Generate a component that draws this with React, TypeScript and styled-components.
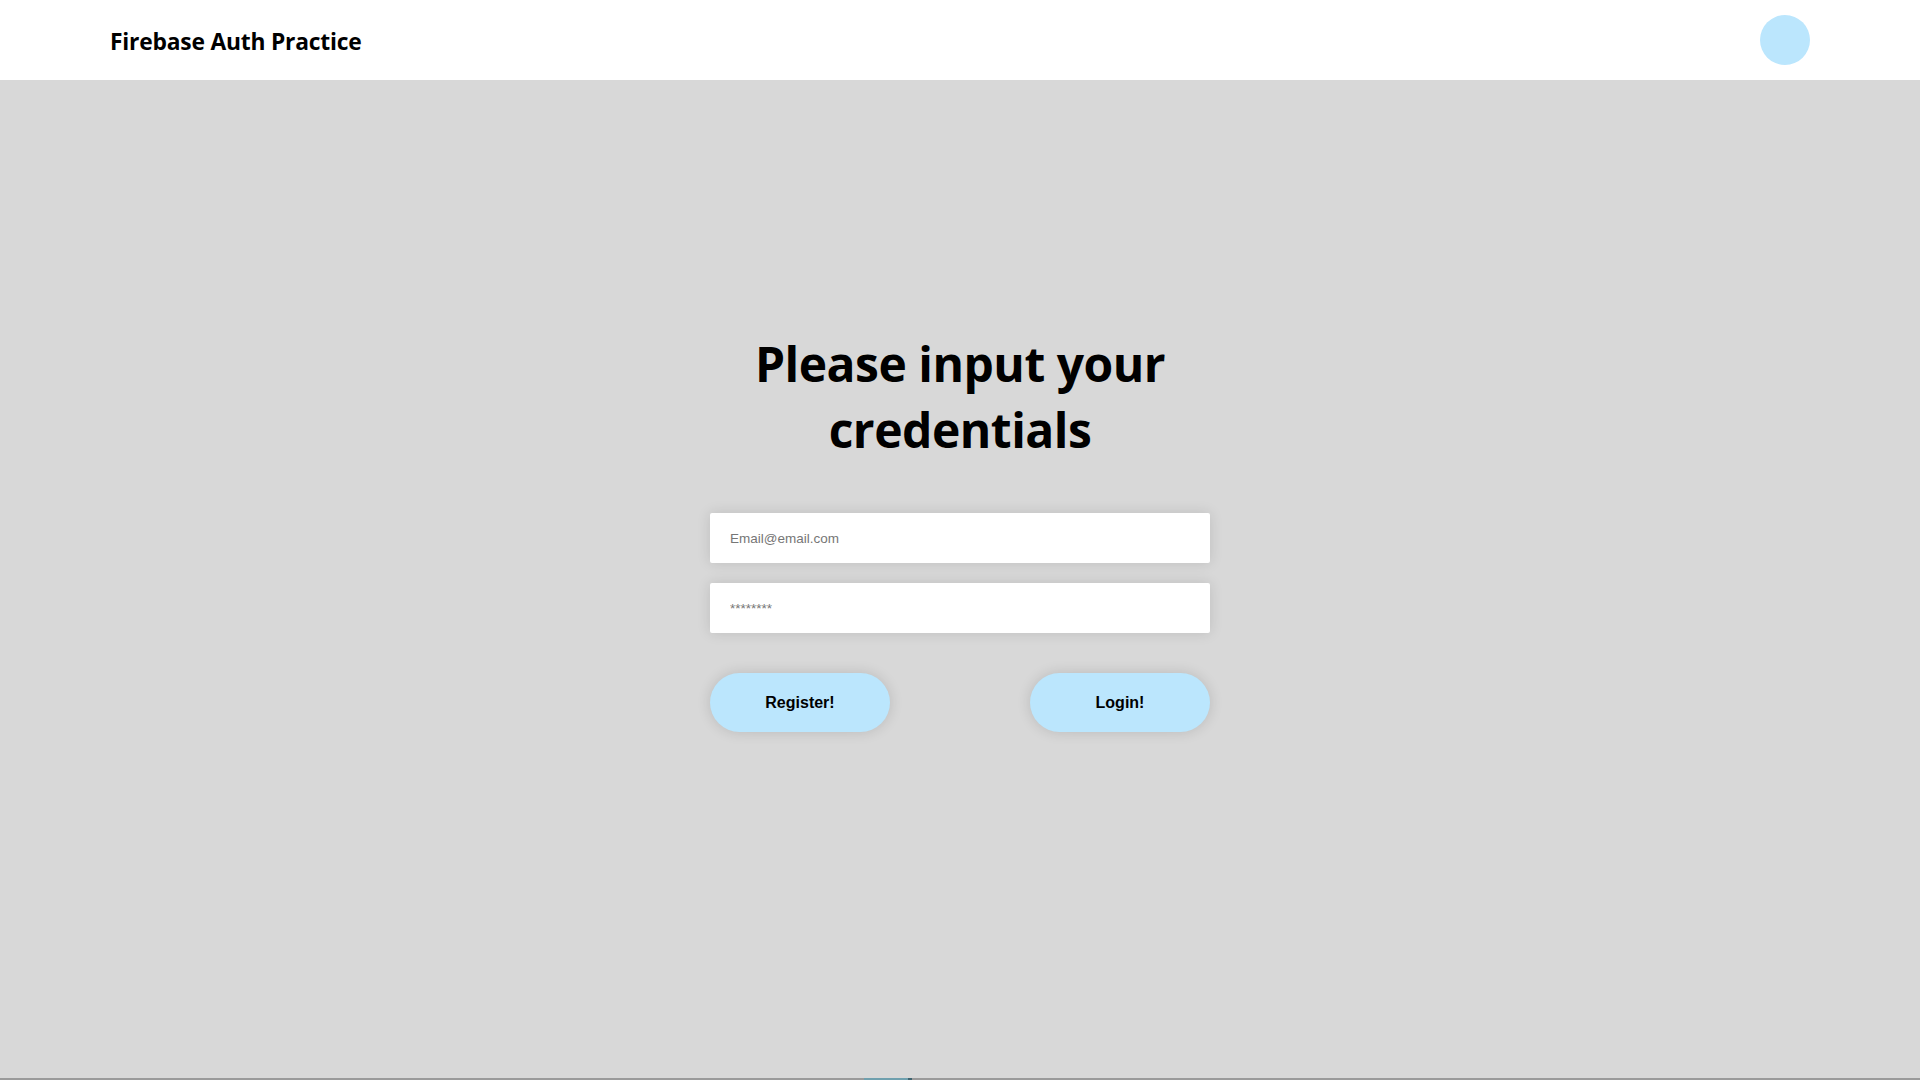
import React from 'react';
import styled, { createGlobalStyle } from 'styled-components';

const GlobalStyle = createGlobalStyle`
    * {
        box-sizing: border-box;
    }
    html, body {
        margin: 0;
        padding: 0;
        height: 100%;
    }
    body {
        font-family: "Open Sans", "Noto Sans", sans-serif;
        background-color: #d8d8d8;
        overflow: hidden;
    }
`;

const Page = styled.div`
    display: flex;
    flex-direction: column;
    height: 1080px;
`;

const Header = styled.header`
    height: 80px;
    flex-shrink: 0;
    background-color: #ffffff;
    display: flex;
    align-items: center;
    justify-content: space-between;
    padding: 0 110px;
`;

const Title = styled.h1`
    margin: 2px 0 0;
    font-size: 22.8px;
    font-weight: 700;
    color: #000;
    letter-spacing: -0.2px;
`;

const Avatar = styled.div`
    width: 50px;
    height: 50px;
    border-radius: 50%;
    background-color: #bbe6fd;
`;

const Main = styled.main`
    flex: 1;
    display: flex;
    justify-content: center;
    padding-top: 251px;
`;

const Form = styled.form`
    width: 500px;
    display: flex;
    flex-direction: column;
`;

const Heading = styled.h2`
    margin: 0 0 50px;
    text-align: center;
    font-size: 48px;
    line-height: 66px;
    font-weight: 700;
    color: #000;
    letter-spacing: -0.5px;
`;

const Input = styled.input`
    height: 50px;
    width: 100%;
    border: none;
    border-radius: 2px;
    padding: 0 20px;
    background: #fff;
    font-family: "Liberation Sans", Arial, sans-serif;
    font-size: 13.5px;
    color: #333;
    box-shadow: 0 0 14px rgba(0, 0, 0, 0.12);
    outline: none;
    & + & {
        margin-top: 20px;
    }
    &::placeholder {
        color: #767676;
    }
`;

const Buttons = styled.div`
    display: flex;
    justify-content: space-between;
    margin-top: 40px;
`;

const Button = styled.button`
    width: 180px;
    height: 59px;
    border: none;
    border-radius: 30px;
    background-color: #bbe6fd;
    font-family: "Liberation Sans", Arial, sans-serif;
    font-size: 16px;
    font-weight: 700;
    color: #000;
    box-shadow: 0 0 14px rgba(0, 0, 0, 0.14);
    cursor: pointer;
`;

const Footer = styled.div`
    height: 2px;
    flex-shrink: 0;
    background-color: #9a9a9a;
    display: flex;
`;

const Progress = styled.div`
    margin-left: 864px;
    width: 48px;
    height: 100%;
    background-color: #6fa0ae;
    border-right: 4px solid #3f6470;
`;

const App: React.FC = () => {
  return (
    <Page>
        <GlobalStyle />
        <Header>
            <Title>Firebase Auth Practice</Title>
            <Avatar />
        </Header>
        <Main>
            <Form onSubmit={(e) => e.preventDefault()}>
                <Heading>Please input your credentials</Heading>
                <Input type="email" placeholder="Email@email.com" />
                <Input type="password" placeholder="********" />
                <Buttons>
                    <Button type="button">Register!</Button>
                    <Button type="submit">Login!</Button>
                </Buttons>
            </Form>
        </Main>
        <Footer>
            <Progress />
        </Footer>
    </Page>
  )
}

export default App
